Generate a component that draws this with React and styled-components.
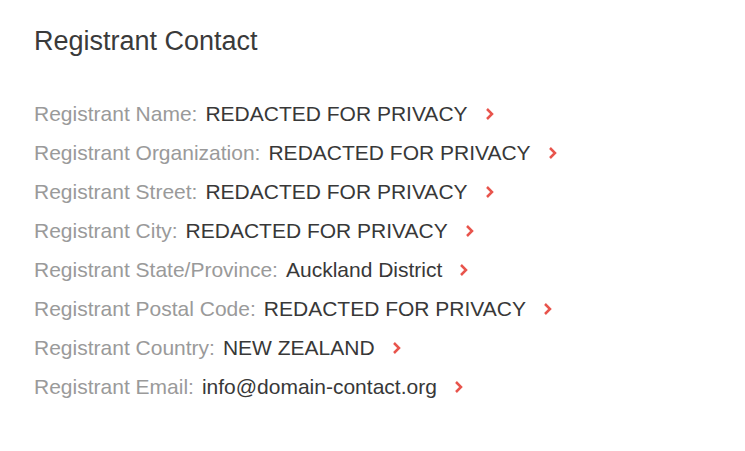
import React from "react";
import styled, { createGlobalStyle } from "styled-components";

const GlobalStyle = createGlobalStyle`
  body {
    margin: 0;
    background: #ffffff;
    font-family: "Liberation Sans", Arial, sans-serif;
  }
`;

const Panel = styled.section`
  padding: 24px 34px;
`;

const Title = styled.h2`
  margin: 0;
  font-size: 27px;
  line-height: 34px;
  font-weight: 400;
  color: #3a3a3a;
`;

const List = styled.ul`
  list-style: none;
  margin: 36px 0 0;
  padding: 0;
`;

const Row = styled.li`
  display: flex;
  align-items: center;
  height: 39px;
  font-size: 21px;
`;

const Label = styled.span`
  color: #9a9a9a;
  margin-right: 8px;
`;

const Value = styled.span`
  color: #383838;
`;

const Chevron = styled.svg`
  margin-left: 16px;
  width: 10px;
  height: 14px;
  flex: none;
`;

const fields = [
  ["Registrant Name:", "REDACTED FOR PRIVACY"],
  ["Registrant Organization:", "REDACTED FOR PRIVACY"],
  ["Registrant Street:", "REDACTED FOR PRIVACY"],
  ["Registrant City:", "REDACTED FOR PRIVACY"],
  ["Registrant State/Province:", "Auckland District"],
  ["Registrant Postal Code:", "REDACTED FOR PRIVACY"],
  ["Registrant Country:", "NEW ZEALAND"],
  ["Registrant Email:", "info@domain-contact.org"],
];

const App = () => {
  return (
    <>
      <GlobalStyle />
      <Panel>
        <Title>Registrant Contact</Title>
        <List>
          {fields.map(([label, value]) => (
            <Row key={label}>
              <Label>{label}</Label>
              <Value>{value}</Value>
              <Chevron viewBox="0 0 10 14">
                <polyline
                  points="3,2 8,7 3,12"
                  fill="none"
                  stroke="#e8544c"
                  strokeWidth="2.5"
                />
              </Chevron>
            </Row>
          ))}
        </List>
      </Panel>
    </>
  );
};

export default App;
